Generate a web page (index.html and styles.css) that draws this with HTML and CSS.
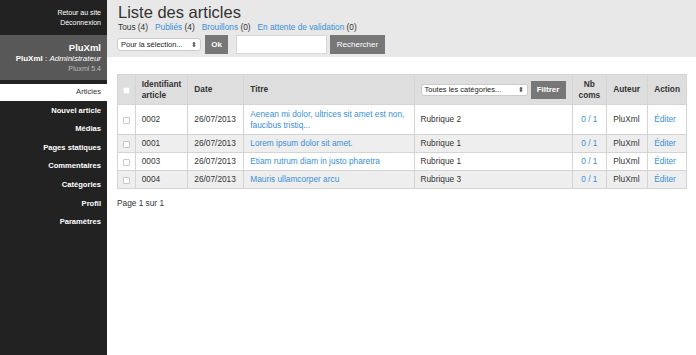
FILE: index.html
```html
<!DOCTYPE html>
<html lang="fr">
<head>
<meta charset="utf-8">
<title>Liste des articles</title>
<link rel="stylesheet" href="styles.css">
</head>
<body>
<div class="layout">
  <aside class="sidebar">
    <div class="top-links">
      <a href="#">Retour au site</a>
      <a href="#">Déconnexion</a>
    </div>
    <div class="profile">
      <div class="site-name">PluXml</div>
      <div class="user"><b>PluXml</b> : <i>Administrateur</i></div>
      <div class="version">Pluxml 5.4</div>
    </div>
    <nav class="menu">
      <a href="#" class="active">Articles</a>
      <a href="#">Nouvel article</a>
      <a href="#">Médias</a>
      <a href="#">Pages statiques</a>
      <a href="#">Commentaires</a>
      <a href="#">Catégories</a>
      <a href="#">Profil</a>
      <a href="#">Paramètres</a>
    </nav>
  </aside>
  <main class="main">
    <header class="head">
      <h1>Liste des articles</h1>
      <div class="filters">
        <span>Tous <span class="cnt">(4)</span></span>
        <span><a href="#">Publiés</a> <span class="cnt">(4)</span></span>
        <span><a href="#">Brouillons</a> <span class="cnt">(0)</span></span>
        <span><a href="#">En attente de validation</a> <span class="cnt">(0)</span></span>
      </div>
      <div class="controls">
        <div class="select sel-action">Pour la sélection... <span class="arrows">⬍</span></div>
        <button class="btn btn-ok">Ok</button>
        <input class="search" type="text">
        <button class="btn btn-search">Rechercher</button>
      </div>
    </header>
    <div class="content">
      <table class="grid">
        <thead>
          <tr>
            <th class="c-chk"><span class="chk chk-h"></span></th>
            <th class="c-id">Identifiant<br>article</th>
            <th class="c-date">Date</th>
            <th class="c-title">Titre</th>
            <th class="c-cat"><div class="cat-filter"><div class="select sel-cat">Toutes les catégories... <span class="arrows">⬍</span></div><button class="btn btn-filter">Filtrer</button></div></th>
            <th class="c-com">Nb<br>coms</th>
            <th class="c-auth">Auteur</th>
            <th class="c-act">Action</th>
          </tr>
        </thead>
        <tbody>
          <tr class="tall">
            <td class="c-chk"><span class="chk"></span></td>
            <td>0002</td>
            <td>26/07/2013</td>
            <td><a href="#">Aenean mi dolor, ultrices sit amet est non,<br>faucibus tristiq...</a></td>
            <td>Rubrique 2</td>
            <td class="c-com"><a href="#">0 / 1</a></td>
            <td>PluXml</td>
            <td><a href="#">Éditer</a></td>
          </tr>
          <tr class="alt">
            <td class="c-chk"><span class="chk"></span></td>
            <td>0001</td>
            <td>26/07/2013</td>
            <td><a href="#">Lorem ipsum dolor sit amet.</a></td>
            <td>Rubrique 1</td>
            <td class="c-com"><a href="#">0 / 1</a></td>
            <td>PluXml</td>
            <td><a href="#">Éditer</a></td>
          </tr>
          <tr>
            <td class="c-chk"><span class="chk"></span></td>
            <td>0003</td>
            <td>26/07/2013</td>
            <td><a href="#">Etiam rutrum diam in justo pharetra</a></td>
            <td>Rubrique 1</td>
            <td class="c-com"><a href="#">0 / 1</a></td>
            <td>PluXml</td>
            <td><a href="#">Éditer</a></td>
          </tr>
          <tr class="alt">
            <td class="c-chk"><span class="chk"></span></td>
            <td>0004</td>
            <td>26/07/2013</td>
            <td><a href="#">Mauris ullamcorper arcu</a></td>
            <td>Rubrique 3</td>
            <td class="c-com"><a href="#">0 / 1</a></td>
            <td>PluXml</td>
            <td><a href="#">Éditer</a></td>
          </tr>
        </tbody>
      </table>
      <p class="pager">Page 1 sur 1</p>
    </div>
  </main>
</div>
</body>
</html>
```

FILE: styles.css
```css
* { box-sizing: border-box; }
html, body { margin: 0; padding: 0; height: 100%; }
body {
  font-family: "Liberation Sans", Arial, Helvetica, sans-serif;
  font-size: 8.3px;
  color: #333;
  background: #fff;
}
a { color: #3a8fd6; text-decoration: none; }

.layout { display: flex; min-height: 355px; }

.sidebar {
  width: 107px;
  flex: none;
  background: #222;
  color: #fff;
  text-align: right;
}
.top-links {
  display: flex;
  flex-direction: column;
  padding: 8px 6px 0 0;
  height: 35px;
  line-height: 10px;
}
.top-links a { color: #fff; font-size: 7px; }

.profile {
  background: #585858;
  height: 45px;
  padding: 7px 6px 0 0;
}
.site-name { font-size: 9.5px; font-weight: bold; line-height: 12px; }
.user { font-size: 8px; line-height: 10px; }
.user i { font-style: italic; }
.version { font-size: 7px; color: #bbb; line-height: 10px; }

.menu { display: flex; flex-direction: column; padding-top: 4px; }
.menu a {
  color: #fff;
  font-weight: bold;
  font-size: 7.6px;
  line-height: 10px;
  padding: 3px 6px 5.6px 0;
  height: 18.6px;
}
.menu a.active { background: #fff; color: #333; font-weight: normal; height: 17px; margin-bottom: 1.6px; }

.main { flex: 1; display: flex; flex-direction: column; }
.head {
  background: #e8e8e8;
  height: 57px;
  padding: 3px 0 0 11px;
}
.head h1 {
  margin: 0;
  font-weight: normal;
  font-size: 16.5px;
  line-height: 18px;
  color: #333;
}
.filters { display: flex; gap: 7px; line-height: 10px; margin-top: 1px; }
.cnt { color: #333; }

.controls { display: flex; align-items: center; margin-top: 3px; height: 19px; }
.select {
  background: #fff;
  border: 1px solid #ccc;
  border-radius: 3px;
  font-size: 7.5px;
  line-height: 11px;
  padding: 0 3px;
  color: #222;
  white-space: nowrap;
  display: flex;
  justify-content: space-between;
  align-items: center;
}
.arrows { font-size: 7px; color: #555; margin-left: 4px; }
.sel-action { width: 84px; height: 13px; margin-left: -1px; }
.btn {
  font-family: inherit;
  background: #777;
  color: #fff;
  border: none;
  font-size: 8px;
  padding: 0;
  height: 19px;
}
.btn-ok { width: 23px; margin-left: 4px; font-weight: bold; }
.search {
  width: 91px;
  height: 19px;
  border: 1px solid #d6d6d6;
  background: #fff;
  margin-left: 8px;
  padding: 0;
}
.btn-search { width: 55px; margin-left: 3px; }

.content { padding: 17px 9px 0 10px; }
.grid {
  width: 570px;
  border-collapse: collapse;
  border: 1px solid #d4d4d4;
}
.grid th, .grid td {
  border-left: 1px solid #d4d4d4;
  text-align: left;
  padding: 0 6px;
  line-height: 10.5px;
}
.grid th {
  background: #dedede;
  font-weight: bold;
  height: 30px;
  color: #333;
}
.grid td { height: 18px; border-top: 1px solid #d4d4d4; }
.grid tr.tall td { height: 30px; }
.grid tr.alt td { background: #eee; }
.c-chk { width: 18px; text-align: center !important; padding: 0 !important; }
.c-id { width: 52px; }
.c-date { width: 56px; }
.c-title { width: 174px; }
.c-cat { width: 157px; }
.c-com { width: 34px; text-align: center !important; }
.c-auth { width: 41px; }
.c-act { width: 38px; }

.chk {
  display: inline-block;
  width: 7px;
  height: 7px;
  border: 1px solid #c8c8c8;
  border-radius: 1px;
  background: #fff;
  vertical-align: middle;
}
.chk-h { border-color: #e6e6e6; }

.cat-filter { display: flex; align-items: center; }
.sel-cat { width: 107px; height: 12px; font-weight: normal; }
.btn-filter { width: 35px; height: 18px; margin-left: 3px; font-weight: bold; }

.pager { margin: 9px 0 0 0; line-height: 10px; color: #333; }
```
